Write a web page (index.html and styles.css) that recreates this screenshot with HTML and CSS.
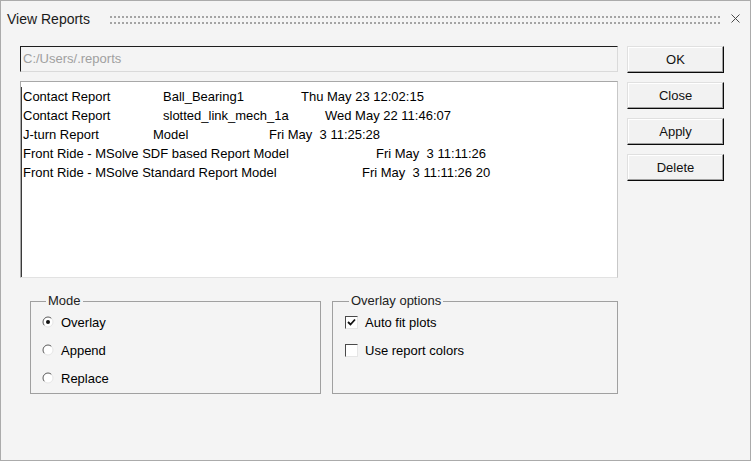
FILE: index.html
```html
<!DOCTYPE html>
<html lang="en">
<head>
    <meta charset="UTF-8">
    <meta name="viewport" content="width=device-width, initial-scale=1.0">
    <title>View Reports</title>
    <link rel="stylesheet" href="styles.css">
</head>
<body>
    <div class="window">
        <div class="titlebar">
            <span class="title">View Reports</span>
            <svg class="grip" height="8">
                <defs>
                    <pattern id="dots" width="4" height="6" patternUnits="userSpaceOnUse">
                        <rect width="2" height="2" fill="#a4a4a4"/>
                    </pattern>
                </defs>
                <rect width="100%" height="8" fill="url(#dots)"/>
            </svg>
            <svg class="close" width="9" height="9" viewBox="0 0 9 9">
                <path d="M0.5 0.5 L8.5 8.5 M8.5 0.5 L0.5 8.5" stroke="#4a4a4a" stroke-width="1"/>
            </svg>
        </div>
        <div class="content">
            <div class="main">
                <div class="path">C:/Users/.reports</div>
                <div class="list">
                    <div class="items">
                        <div class="row"><span class="tab-140">Contact Report</span><span class="tab-138">Ball_Bearing1</span><span>Thu May 23 12:02:15</span></div>
                        <div class="row"><span class="tab-140">Contact Report</span><span class="tab-162">slotted_link_mech_1a</span><span>Wed May 22 11:46:07</span></div>
                        <div class="row"><span class="tab-130">J-turn Report</span><span class="tab-116">Model</span><span>Fri May&nbsp;&nbsp;3 11:25:28</span></div>
                        <div class="row"><span class="tab-353">Front Ride - MSolve SDF based Report Model</span><span>Fri May&nbsp;&nbsp;3 11:11:26</span></div>
                        <div class="row"><span class="tab-339">Front Ride - MSolve Standard Report Model</span><span>Fri May&nbsp;&nbsp;3 11:11:26 20</span></div>
                    </div>
                </div>
                <div class="groups">
                    <fieldset class="group mode">
                        <legend>Mode</legend>
                        <div class="option">
                            <svg class="radio" width="12" height="12" viewBox="0 0 12 12">
                                <circle cx="6" cy="6" r="5" fill="#fff"/>
                                <path d="M2.46 9.54 A5 5 0 0 1 9.54 2.46" fill="none" stroke="#5a5a5a"/>
                                <path d="M9.54 2.46 A5 5 0 0 1 2.46 9.54" fill="none" stroke="#e6e6e6"/>
                                <circle cx="6" cy="6" r="2" fill="#111"/>
                            </svg>
                            <span>Overlay</span>
                        </div>
                        <div class="option">
                            <svg class="radio" width="12" height="12" viewBox="0 0 12 12">
                                <circle cx="6" cy="6" r="5" fill="#fff"/>
                                <path d="M2.46 9.54 A5 5 0 0 1 9.54 2.46" fill="none" stroke="#5a5a5a"/>
                                <path d="M9.54 2.46 A5 5 0 0 1 2.46 9.54" fill="none" stroke="#e6e6e6"/>
                            </svg>
                            <span>Append</span>
                        </div>
                        <div class="option">
                            <svg class="radio" width="12" height="12" viewBox="0 0 12 12">
                                <circle cx="6" cy="6" r="5" fill="#fff"/>
                                <path d="M2.46 9.54 A5 5 0 0 1 9.54 2.46" fill="none" stroke="#5a5a5a"/>
                                <path d="M9.54 2.46 A5 5 0 0 1 2.46 9.54" fill="none" stroke="#e6e6e6"/>
                            </svg>
                            <span>Replace</span>
                        </div>
                    </fieldset>
                    <fieldset class="group options">
                        <legend>Overlay options</legend>
                        <div class="option">
                            <span class="checkbox">
                                <svg width="9" height="9" viewBox="0 0 9 9">
                                    <path d="M1 4 L3.5 6.5 L8 1.5" fill="none" stroke="#111" stroke-width="1.8"/>
                                </svg>
                            </span>
                            <span>Auto fit plots</span>
                        </div>
                        <div class="option">
                            <span class="checkbox"></span>
                            <span>Use report colors</span>
                        </div>
                    </fieldset>
                </div>
            </div>
            <div class="buttons">
                <button class="btn">OK</button>
                <button class="btn">Close</button>
                <button class="btn">Apply</button>
                <button class="btn">Delete</button>
            </div>
        </div>
    </div>
</body>
</html>
```

FILE: styles.css
```css
* {
    box-sizing: border-box;
}

body {
    margin: 0;
    background-color: #fff;
    font-family: "Liberation Sans", Arial, sans-serif;
    font-size: 13px;
    color: #000;
}

.window {
    width: 751px;
    height: 461px;
    border: 1px solid #ababab;
    background-color: #f4f4f4;
}

/* title bar */
.titlebar {
    height: 35px;
    display: flex;
    align-items: flex-start;
    padding: 0 10px 0 6px;
}

.title {
    width: 103px;
    margin-top: 10px;
    font-size: 14px;
    color: #1a1a1a;
}

.grip {
    flex: 1;
    margin-top: 15px;
}

.close {
    margin-top: 13px;
    margin-left: 11px;
}

/* main area */
.content {
    display: flex;
    gap: 9px;
    padding: 10px 0 0 19px;
}

.main {
    width: 598px;
}

.path {
    height: 26px;
    padding-left: 2px;
    line-height: 24px;
    color: #a0a0a0;
    border: 1px solid;
    border-color: #1e1e1e #dadada #dadada #1e1e1e;
}

.list {
    height: 197px;
    margin-top: 9px;
    padding-top: 5px;
    background-color: #fff;
    border: 1px solid;
    border-color: #a8a8a8 #c8c8c8 #e2e2e2 #a8a8a8;
}

.items {
    height: 100%;
    border-left: 1px solid #3a3a3a;
    padding-left: 1px;
}

.row {
    display: flex;
    height: 19px;
    line-height: 19px;
    white-space: nowrap;
}

.tab-116 { width: 116px; }
.tab-130 { width: 130px; }
.tab-138 { width: 138px; }
.tab-140 { width: 140px; }
.tab-162 { width: 162px; }
.tab-339 { width: 339px; }
.tab-353 { width: 353px; }

/* group boxes */
.groups {
    display: flex;
    gap: 11px;
    margin: 16px 0 0 10px;
}

.group {
    margin: 0;
    min-width: 0;
    padding: 0 0 1px 11px;
    border: 1px solid #a0a0a0;
}

.mode {
    width: 291px;
}

.options {
    width: 286px;
    padding-left: 12px;
}

.group legend {
    margin-left: 4px;
    padding: 0 2px;
    line-height: 14px;
    color: #222;
}

.option {
    display: flex;
    align-items: center;
    gap: 7px;
    height: 28px;
}

.radio {
    display: block;
}

.checkbox {
    width: 13px;
    height: 13px;
    display: flex;
    align-items: center;
    justify-content: center;
    background-color: #fff;
    border: 1px solid;
    border-color: #4a4a4a #e6e6e6 #e6e6e6 #4a4a4a;
}

/* buttons */
.buttons {
    width: 97px;
    display: flex;
    flex-direction: column;
    gap: 9px;
}

.btn {
    height: 27px;
    padding: 0;
    font-family: inherit;
    font-size: 13px;
    font-weight: normal;
    color: #111;
    background-color: #f2f2f2;
    border: 1px solid;
    border-color: #e0e0e0 #0a0a0a #0a0a0a #e0e0e0;
    box-shadow: inset -1px -1px #a0a0a0, inset 1px 1px #fff;
}
```
